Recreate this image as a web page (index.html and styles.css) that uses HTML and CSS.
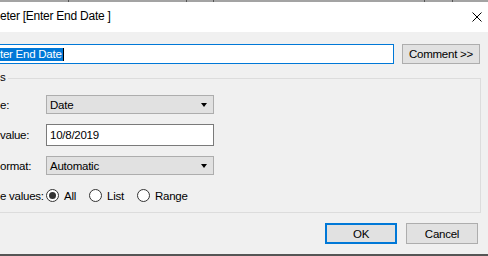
FILE: index.html
```html
<!DOCTYPE html>
<html lang="en">
<head>
    <meta charset="UTF-8">
    <title>Edit Parameter</title>
    <link rel="stylesheet" href="styles.css">
</head>
<body>

<div class="topstrip">
    <span class="tick t1"></span>
    <span class="tick t2"></span>
    <span class="tick t3"></span>
    <span class="tick t4"></span>
    <span class="tick t5"></span>
</div>

<div class="titlebar">
    <div class="title">eter [Enter End Date ]</div>
    <svg class="close" width="10" height="10" viewBox="0 0 10 10">
        <path d="M0.5 0.5 L9.5 9.5 M9.5 0.5 L0.5 9.5" stroke="#000" stroke-width="1" fill="none"/>
    </svg>
</div>

<div class="dialog">
    <div class="name-row">
        <div class="name-input">
            <span class="selected">ter End Date</span><span class="caret"></span>
        </div>
        <button class="btn comment">Comment &gt;&gt;</button>
    </div>

    <div class="group">
        <span class="legend">s</span>

        <div class="row">
            <div class="label">e:</div>
            <div class="combo">
                <span>Date</span>
                <span class="arrow"></span>
            </div>
        </div>

        <div class="row">
            <div class="label">value:</div>
            <div class="textbox">10/8/2019</div>
        </div>

        <div class="row">
            <div class="label">ormat:</div>
            <div class="combo">
                <span>Automatic</span>
                <span class="arrow"></span>
            </div>
        </div>

        <div class="row radios">
            <div class="label">e values:</div>
            <label class="radio"><span class="dot on"></span>All</label>
            <label class="radio"><span class="dot"></span>List</label>
            <label class="radio"><span class="dot"></span>Range</label>
        </div>
    </div>

    <div class="footer">
        <button class="btn ok">OK</button>
        <button class="btn">Cancel</button>
    </div>
</div>

<div class="bottomline"></div>

</body>
</html>
```

FILE: styles.css
```css
* { margin: 0; padding: 0; box-sizing: border-box; }
body {
    font-family: 'Liberation Sans', Arial, sans-serif;
    font-size: 11.5px; color: #000; letter-spacing: -0.25px;
    background: #f0f0f0;
    width: 488px; height: 256px; overflow: hidden;
}

.topstrip {
    height: 2px; background: #a3a3a3; position: relative;
}
.tick { position: absolute; top: 0; width: 1px; height: 2px; background: #555; }
.t1 { left: 68px; }
.t2 { left: 186px; }
.t3 { left: 213px; }
.t4 { left: 424px; }
.t5 { left: 452px; }

.titlebar {
    height: 30px; background: #fff;
    display: flex; align-items: center; justify-content: space-between;
    padding-right: 6px;
}
.title { font-size: 12px; padding-bottom: 2px; }

.dialog { padding: 12px 0 0 0; }

.name-row {
    display: flex; align-items: flex-start; gap: 8px;
    padding-right: 8px;
}
.name-input {
    width: 394px; height: 20px;
    background: #fff; border: 1px solid #0078d7; border-left: none;
    display: flex; align-items: center;
}
.selected {
    background: #0078d7; color: #fff;
    line-height: 13px; padding-right: 1px;
}
.caret { width: 1px; height: 13px; background: #000; }

.btn {
    font-family: inherit; font-size: 11.5px; color: #000; letter-spacing: inherit;
    background: #e1e1e1; border: 1px solid #adadad;
    height: 21px; width: 72px;
}
.comment { width: 78px; height: 20px; }
.ok { border: 2px solid #0078d7; }

.group {
    position: relative;
    margin-top: 14px; margin-right: 7px;
    height: 135px;
    border: 1px solid #dcdcdc; border-left: none;
    padding-top: 16px;
    display: flex; flex-direction: column; gap: 10px;
}
.legend {
    position: absolute; top: -8px; left: 0;
    background: #f0f0f0; padding-right: 2px;
}

.row { display: flex; align-items: center; }
.label { width: 46px; flex-shrink: 0; white-space: nowrap; }

.combo {
    width: 168px; height: 19px;
    background: #e1e1e1; border: 1px solid #adadad;
    display: flex; align-items: center; justify-content: space-between;
    padding: 0 6px 0 3px;
}
.arrow {
    width: 0; height: 0;
    border-left: 3.5px solid transparent; border-right: 3.5px solid transparent;
    border-top: 4px solid #000;
}
.textbox {
    width: 168px; height: 22px;
    background: #fff; border: 1px solid #7a7a7a;
    display: flex; align-items: center; padding-left: 3px;
}

.radios { margin-top: 4px; }
.radio { display: flex; align-items: center; gap: 5px; margin-right: 13px; }
.dot {
    width: 13px; height: 13px; border-radius: 50%;
    border: 1px solid #333; background: #fff;
    display: flex; align-items: center; justify-content: center;
}
.dot.on::after {
    content: ""; width: 7px; height: 7px; border-radius: 50%; background: #333;
}

.footer {
    display: flex; justify-content: flex-end; gap: 9px;
    margin-top: 10px; padding-right: 10px;
}

.bottomline {
    position: absolute; left: 0; bottom: 0;
    width: 488px; height: 2px; background: #555;
}
```
